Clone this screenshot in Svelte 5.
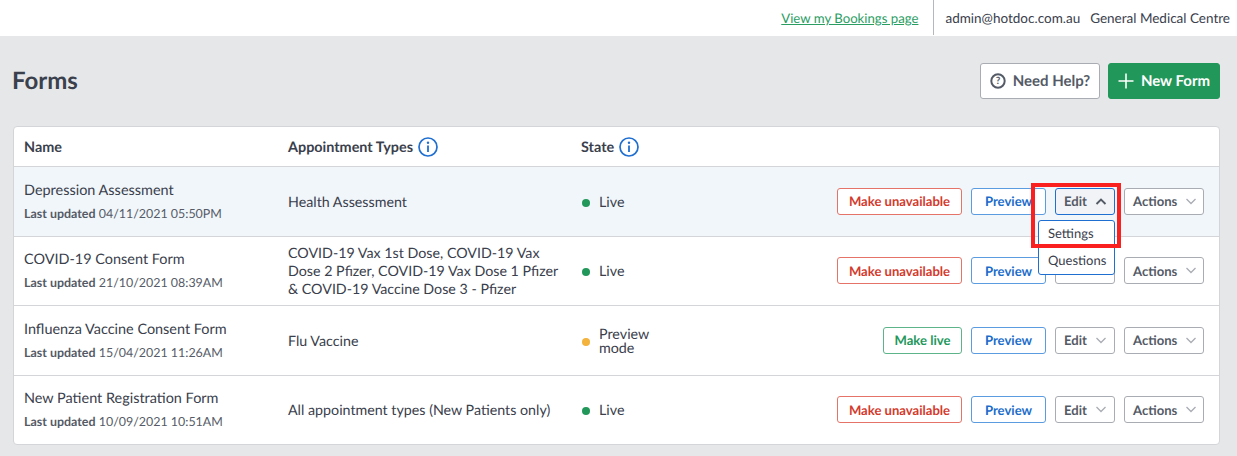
<script>
  const rows = [
    { name: 'Depression Assessment', date: '04/11/2021 05:50PM', types: 'Health Assessment', state: 'Live', open: true, editLabel: 'Edit' },
    { name: 'COVID-19 Consent Form', date: '21/10/2021 08:39AM', types: 'COVID-19 Vax 1st Dose, COVID-19 Vax Dose 2 Pfizer, COVID-19 Vax Dose 1 Pfizer & COVID-19 Vaccine Dose 3 - Pfizer', state: 'Live', editLabel: '' },
    { name: 'Influenza Vaccine Consent Form', date: '15/04/2021 11:26AM', types: 'Flu Vaccine', state: 'Preview mode', preview: true, editLabel: 'Edit' },
    { name: 'New Patient Registration Form', date: '10/09/2021 10:51AM', types: 'All appointment types (New Patients only)', state: 'Live', editLabel: 'Edit' }
  ];
</script>

{#snippet info()}
  <svg class="info" viewBox="0 0 20 20" width="20" height="20" fill="none">
    <circle cx="10" cy="10" r="9" stroke="#1f6fd1" stroke-width="1.7" />
    <circle cx="10" cy="5.8" r="1.2" fill="#1f6fd1" />
    <path d="M10 8.5v6.5" stroke="#1f6fd1" stroke-width="1.8" />
  </svg>
{/snippet}

{#snippet chev(up)}
  <svg class="chev" class:up viewBox="0 0 12 7" width="12" height="7" fill="none">
    <path d={up ? 'M1.5 6 6 1.5 10.5 6' : 'M1.5 1 6 5.5 10.5 1'} stroke="currentColor" stroke-width={up ? 1.9 : 1.3} />
  </svg>
{/snippet}

<div class="page">
  <header class="top">
    <a class="book" href="#b">View my Bookings page</a>
    <div class="who">
      <span>admin@hotdoc.com.au</span>
      <span>General Medical Centre</span>
    </div>
  </header>

  <main class="main">
    <div class="titlebar">
      <h1>Forms</h1>
      <div class="titleactions">
        <button class="help">
          <svg viewBox="0 0 16 16" width="16" height="16" fill="none">
            <circle cx="8" cy="8" r="6.7" stroke="#555b66" stroke-width="2" />
            <text x="8" y="11.4" text-anchor="middle" class="q">?</text>
          </svg>
          Need Help?
        </button>
        <button class="new">
          <svg viewBox="0 0 16 16" width="16" height="16" fill="none">
            <path d="M8 .5v15M.5 8h15" stroke="#fff" stroke-width="1.6" />
          </svg>
          New Form
        </button>
      </div>
    </div>

    <section class="card">
      <div class="row head">
        <div class="c1">Name</div>
        <div class="c2">Appointment Types {@render info()}</div>
        <div class="c3">State {@render info()}</div>
      </div>
      {#each rows as r}
        <div class="row body" class:active={r.open}>
          <div class="c1">
            <div class="name">{r.name}</div>
            <div class="upd"><b>Last updated</b> {r.date}</div>
          </div>
          <div class="c2 types">{r.types}</div>
          <div class="c3 state">
            <i class="dot" class:amber={r.preview}></i>
            <span class="statetext">{r.state}</span>
          </div>
          <div class="btns">
            {#if r.preview}
              <button class="btn live">Make live</button>
            {:else}
              <button class="btn unavail">Make unavailable</button>
            {/if}
            <button class="btn prev">Preview</button>
            <div class="editwrap">
              <button class="btn drop edit" class:open={r.open}><span class="lbl">{r.editLabel}</span>{@render chev(r.open)}</button>
              {#if r.open}
                <div class="menu">
                  <div>Settings</div>
                  <div>Questions</div>
                </div>
                <div class="redbox"></div>
              {/if}
            </div>
            <button class="btn drop act"><span class="lbl">Actions</span>{@render chev(false)}</button>
          </div>
        </div>
      {/each}
    </section>
  </main>
</div>

<style>
  :global(body) { margin: 0; }
  .page {
    width: 1237px; height: 456px; overflow: hidden; background: #e6e7e9;
    font-family: Lato, "Liberation Sans", sans-serif; color: #3a404c; font-size: 14px;
    text-rendering: geometricPrecision;
  }
  .top {
    height: 36px; background: #fff; display: flex; justify-content: flex-end; align-items: center;
    padding-right: 7px; box-sizing: border-box;
  }
  .book { color: #2a9d63; font-size: 13.2px; text-decoration: underline; margin-right: 15px; }
  .who {
    height: 35px; align-self: flex-start; border-left: 1px solid #b4b7bc; padding-left: 11px;
    display: flex; gap: 10px; align-items: center; font-size: 13.5px; box-sizing: border-box;
  }
  .main { padding: 0 17px 0 13px; }
  .titlebar { display: flex; justify-content: space-between; align-items: center; height: 90px; }
  h1 { margin: 0 0 2px -1px; font-size: 24px; font-weight: 700; color: #3a404c; }
  .titleactions { display: flex; gap: 8px; }
  button { font-family: inherit; text-rendering: geometricPrecision; box-sizing: border-box; cursor: pointer; }
  .help, .new {
    height: 36px; border-radius: 3px; font-size: 15px; font-weight: 700;
    display: flex; align-items: center; justify-content: center; gap: 7px; padding: 0;
  }
  .help { width: 120px; background: #fff; border: 1px solid #a9acb3; color: #555b66; }
  .new { width: 112px; background: #22975a; border: 1px solid #22975a; color: #fff; }
  .q { font: 700 10px Lato, sans-serif; fill: #555b66; }
  .card { background: #fff; border: 1px solid #d3d5d9; border-radius: 4px; }
  .row { display: flex; align-items: center; padding: 0 15px 0 10px; }
  .head { height: 38px; padding-top: 1px; font-weight: 700; font-size: 14.4px; }
  .head .c2, .head .c3 { display: flex; align-items: center; gap: 5px; }
  .head .info { margin-top: -1px; }
  .body { height: 66px; padding-top: 2.6px; border-top: 1px solid #d3d5d9; }
  .body.active { background: #f1f6fb; }
  .c1 { width: 264px; flex: none; }
  .c2 { width: 293px; flex: none; }
  .c3 { width: 100px; flex: none; }
  .types { font-size: 14.25px; line-height: 18px; width: 275px; margin-right: 18px; }
  .name { font-size: 14.45px; line-height: 20px; margin-top: -2px; }
  .upd { font-size: 12.45px; line-height: 18px; margin-top: 4px; color: #555b66; }
  .upd b { font-weight: 700; }
  .state { display: flex; align-items: center; gap: 9px; }
  .dot { width: 8px; height: 8px; border-radius: 50%; background: #22975a; flex: none; margin-left: 1px; }
  .dot.amber { background: #f3b33d; }
  .statetext { width: 60px; line-height: 14px; font-size: 14.3px; }
  .btns { margin: -3.2px 0 0 auto; display: flex; gap: 9px; }
  .btn {
    height: 27px; border-radius: 3px; background: #fff; font-size: 13.1px; font-weight: 700;
    padding: 0; display: flex; align-items: center; justify-content: center;
  }
  .unavail { width: 125px; border: 1px solid #e57368; color: #d33a2c; }
  .live { width: 79px; border: 1px solid #5db48a; color: #22975a; }
  .prev { width: 75px; border: 1px solid #5b9be0; color: #1a6ccb; }
  .drop { border: 1px solid #a9acb3; color: #555b66; justify-content: flex-start; padding-left: 8px; gap: 8px; }
  .edit { width: 60px; }
  .act { width: 80px; }
  .edit.open { border-color: #1f6fd1; background: #f2f3f6; }
  .chev { color: #a9acb3; flex: none; }
  .chev.up { color: #555b66; }
  .editwrap { position: relative; }
  .menu {
    position: absolute; left: -17px; top: 32.5px; width: 77px; height: 55px; box-sizing: border-box;
    background: #fff; border: 1px solid #1f6fd1; border-radius: 3px; font-size: 13px; z-index: 2;
  }
  .menu div { height: 27px; line-height: 24px; padding-left: 9px; }
  .redbox {
    position: absolute; left: -24px; top: -4.5px; width: 90px; height: 65px; box-sizing: border-box;
    border: 4px solid #fb2020; z-index: 3; pointer-events: none;
  }
</style>
